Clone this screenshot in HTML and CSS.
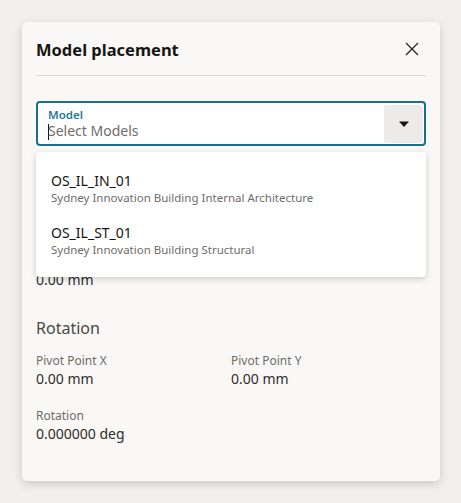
FILE: index.html
```html
<!DOCTYPE html>
<html lang="en">
<head>
    <meta charset="UTF-8">
    <title>Model placement</title>
    <link rel="stylesheet" href="styles.css">
</head>
<body>

    <section class="dialog">
        <!-- Header -->
        <div class="dialog-header">
            <h1 class="dialog-title">Model placement</h1>
            <button class="close-btn" aria-label="Close">
                <svg width="14" height="14" viewBox="0 0 14 14"><path d="M1 1 L13 13 M13 1 L1 13" stroke="#2b2b2b" stroke-width="1.4" fill="none"/></svg>
            </button>
        </div>

        <!-- Model select with open dropdown -->
        <div class="select-wrap">
            <div class="select-field">
                <div class="select-text">
                    <label class="field-label">Model</label>
                    <div class="placeholder"><span class="caret"></span>Select Models</div>
                </div>
                <button class="select-btn" aria-label="Open">
                    <svg width="12" height="7" viewBox="0 0 12 7"><path d="M1 0.5 H11 L6 6 Z" fill="#161513"/></svg>
                </button>
            </div>

            <ul class="dropdown">
                <li class="option">
                    <div class="option-name">OS_IL_IN_01</div>
                    <div class="option-desc">Sydney Innovation Building Internal Architecture</div>
                </li>
                <li class="option">
                    <div class="option-name">OS_IL_ST_01</div>
                    <div class="option-desc">Sydney Innovation Building Structural</div>
                </li>
            </ul>
        </div>

        <!-- Position (mostly under the dropdown) -->
        <div class="section section-first">
            <h2 class="section-title">Position</h2>
            <div class="fields">
                <div class="field">
                    <div class="label">X</div>
                    <div class="value">0.00 mm</div>
                </div>
                <div class="field">
                    <div class="label">Y</div>
                    <div class="value">0.00 mm</div>
                </div>
                <div class="field">
                    <div class="label">Z</div>
                    <div class="value">0.00 mm</div>
                </div>
            </div>
        </div>

        <!-- Rotation -->
        <div class="section">
            <h2 class="section-title">Rotation</h2>
            <div class="fields">
                <div class="field">
                    <div class="label">Pivot Point X</div>
                    <div class="value">0.00 mm</div>
                </div>
                <div class="field">
                    <div class="label">Pivot Point Y</div>
                    <div class="value">0.00 mm</div>
                </div>
                <div class="field">
                    <div class="label">Rotation</div>
                    <div class="value">0.000000 deg</div>
                </div>
            </div>
        </div>
    </section>

</body>
</html>
```

FILE: styles.css
```css
/* page */
body{
    margin: 0;
    padding: 22px;
    background: #f1f0ee;
    font-family: "Noto Sans", "Open Sans", sans-serif;
    color: #161513;
}

/* dialog card */
.dialog{
    box-sizing: border-box;
    width: 418px;
    height: 459px;
    padding: 0 14px;
    background: #f9f8f6;
    border-radius: 5px;
    box-shadow: 0 3px 10px rgba(0, 0, 0, 0.16);
}

.dialog-header{
    display: flex;
    align-items: center;
    justify-content: space-between;
    height: 53px;
    border-bottom: 1px solid #dcdad7;
}

.dialog-title{
    margin: 0;
    padding-top: 1px;
    font-size: 16.5px;
    font-weight: 700;
    color: #161513;
}

.close-btn{
    display: flex;
    align-items: center;
    justify-content: center;
    width: 28px;
    height: 28px;
    padding: 0;
    border: none;
    background: none;
    cursor: pointer;
}

/* select */
.select-wrap{
    position: relative;
    margin-top: 25px;
}

.select-field{
    display: flex;
    align-items: center;
    justify-content: space-between;
    box-sizing: border-box;
    height: 45px;
    padding: 2px 1px 1px 10px;
    background: #fff;
    border: 2px solid #1a6f8f;
    border-radius: 4px;
}

.select-text{
    display: flex;
    flex-direction: column;
    margin-top: -1px;
}

.field-label{
    font-size: 11.5px;
    line-height: 15px;
    font-weight: 600;
    color: #227a9c;
}

.placeholder{
    font-size: 14px;
    line-height: 18px;
    color: #6f6c69;
}

.caret{
    display: inline-block;
    width: 1px;
    height: 16px;
    margin-right: -1px;
    vertical-align: -4px;
    background: #161513;
}

.select-btn{
    display: flex;
    align-items: center;
    justify-content: center;
    width: 39px;
    height: 38px;
    padding: 0;
    border: none;
    border-radius: 3px;
    background: #ecebe9;
    cursor: pointer;
}

/* dropdown list - sits on top of the form */
.dropdown{
    position: absolute;
    top: 51px;
    left: 0;
    right: 0;
    z-index: 2;
    margin: 0;
    padding: 10px 0 11px 0;
    list-style: none;
    background: #fff;
    border-radius: 4px;
    box-shadow: 0 2px 6px rgba(0, 0, 0, 0.18);
}

.option{
    padding: 10px 14px 9px 15px;
    cursor: pointer;
}

.option-name{
    font-size: 14px;
    line-height: 18px;
    color: #161513;
}

.option-desc{
    font-size: 11.5px;
    line-height: 15px;
    color: #6f6c69;
}

/* sections */
.section{
    margin-top: 28px;
}

.section-first{
    margin-top: 17px;
}

.section-title{
    margin: 0 0 13px 0;
    font-size: 16px;
    line-height: 22px;
    font-weight: 400;
    color: #4a4846;
}

.fields{
    display: grid;
    grid-template-columns: 195px 1fr;
    row-gap: 19px;
}

.label{
    font-size: 12px;
    line-height: 17px;
    color: #6f6c69;
}

.value{
    font-size: 14px;
    line-height: 19px;
    color: #2f2c2a;
}
```
